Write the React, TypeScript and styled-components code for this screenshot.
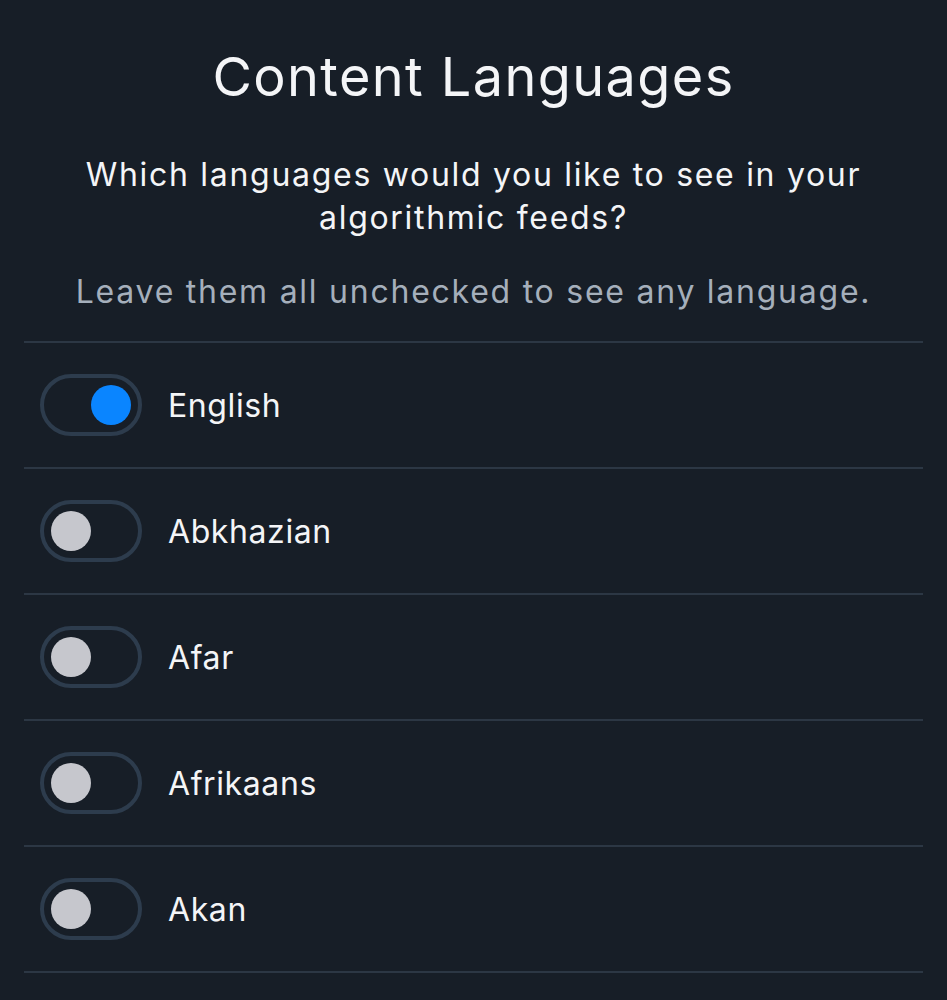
import React from "react";
import styled, { createGlobalStyle } from "styled-components";

const GlobalStyle = createGlobalStyle`
  html, body {
    margin: 0;
    padding: 0;
    background: #171e27;
  }
  body {
    font-family: Inter, "Noto Sans", sans-serif;
    color: #f1f3f5;
  }
`;

const Page = styled.div`
  min-height: 1000px;
  background: #171e27;
  padding: 0 24px 0 24px;
  box-sizing: border-box;
`;

const Header = styled.div`
  display: flex;
  flex-direction: column;
  align-items: center;
  text-align: center;
  padding: 44px 0 28px;
`;

const Title = styled.h1`
  margin: 0;
  font-size: 54px;
  font-weight: 400;
  line-height: 66px;
  letter-spacing: 1.4px;
  color: #f4f5f7;
`;

const Subtitle = styled.p`
  margin: 43px 0 0;
  font-size: 32px;
  font-weight: 400;
  line-height: 43px;
  letter-spacing: 1.7px;
  color: #f4f5f7;
`;

const Hint = styled.p`
  margin: 31px 0 0;
  font-size: 32px;
  font-weight: 400;
  line-height: 43px;
  letter-spacing: 1.75px;
  color: #a5afbb;
`;

const List = styled.div`
  display: flex;
  flex-direction: column;
  border-top: 2px solid #2c3744;
`;

const Row = styled.label`
  display: flex;
  align-items: center;
  gap: 26px;
  height: 124px;
  padding-left: 16px;
  border-bottom: 2px solid #2c3744;
  cursor: pointer;
`;

const Track = styled.span<{ $on: boolean }>`
  display: flex;
  align-items: center;
  justify-content: ${(p) => (p.$on ? "flex-end" : "flex-start")};
  width: 102px;
  height: 62px;
  padding: 0 7px;
  box-sizing: border-box;
  border: 4px solid #2d3c4d;
  border-radius: 31px;
`;

const Knob = styled.span<{ $on: boolean }>`
  width: 40px;
  height: 40px;
  border-radius: 50%;
  background: ${(p) => (p.$on ? "#0a85ff" : "#c6c7cd")};
`;

const Name = styled.span`
  font-size: 32px;
  font-weight: 400;
  letter-spacing: 0.6px;
  color: #f4f5f7;
`;

const languages = ["English", "Abkhazian", "Afar", "Afrikaans", "Akan"];

export default function App() {
  const [selected, setSelected] = React.useState<string[]>(["English"]);

  const toggle = (lang: string) =>
    setSelected((cur) =>
      cur.includes(lang) ? cur.filter((l) => l !== lang) : [...cur, lang]
    );

  return (
    <Page>
      <GlobalStyle />
      <Header>
        <Title>Content Languages</Title>
        <Subtitle>
          Which languages would you like to see in your
          <br />
          algorithmic feeds?
        </Subtitle>
        <Hint>Leave them all unchecked to see any language.</Hint>
      </Header>
      <List>
        {languages.map((lang) => {
          const on = selected.includes(lang);
          return (
            <Row key={lang} onClick={() => toggle(lang)}>
              <Track $on={on}>
                <Knob $on={on} />
              </Track>
              <Name>{lang}</Name>
            </Row>
          );
        })}
      </List>
    </Page>
  );
}
